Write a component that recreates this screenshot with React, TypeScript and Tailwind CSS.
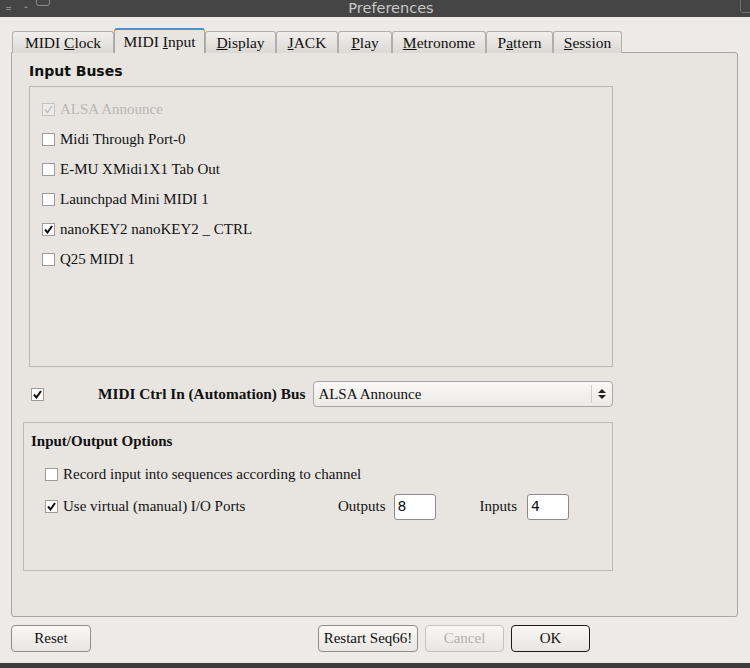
import React from 'react';

const serif = "font-['Liberation_Serif','Times_New_Roman',serif]";
const sans = "font-['DejaVu_Sans','Liberation_Sans',sans-serif]";

function Check({ on, disabled }: { on?: boolean; disabled?: boolean }) {
  return (
    <span
      className={`inline-flex h-[13px] w-[13px] shrink-0 items-center justify-center border ${
        disabled ? 'border-[#c4c2be] bg-[#edebe7]' : 'border-[#9e9c98] bg-white'
      }`}
    >
      {on && (
        <svg width="9" height="9" viewBox="0 0 9 9">
          <path
            d="M1 4.5 L3.5 7.5 L8 1"
            fill="none"
            stroke={disabled ? '#bdbbb7' : '#111'}
            strokeWidth={disabled ? 1.3 : 2}
          />
        </svg>
      )}
    </span>
  );
}

const tabs: { pre: string; u: string; post: string; w: number }[] = [
  { pre: 'MIDI ', u: 'C', post: 'lock', w: 102 },
  { pre: 'MIDI ', u: 'I', post: 'nput', w: 91 },
  { pre: '', u: 'D', post: 'isplay', w: 71 },
  { pre: '', u: 'J', post: 'ACK', w: 62 },
  { pre: '', u: 'P', post: 'lay', w: 54 },
  { pre: '', u: 'M', post: 'etronome', w: 94 },
  { pre: 'P', u: 'a', post: 'ttern', w: 67 },
  { pre: '', u: 'S', post: 'ession', w: 69 },
];

const buses = [
  { name: 'ALSA Announce', on: true, disabled: true },
  { name: 'Midi Through Port-0' },
  { name: 'E-MU XMidi1X1 Tab Out' },
  { name: 'Launchpad Mini MIDI 1' },
  { name: 'nanoKEY2 nanoKEY2 _ CTRL', on: true },
  { name: 'Q25 MIDI 1' },
];

function Btn({ label, w, disabled, def }: { label: string; w: number; disabled?: boolean; def?: boolean }) {
  return (
    <button
      className={`h-[27px] rounded-[4px] border bg-gradient-to-b from-[#f8f7f5] to-[#e9e6e2] text-[15px] ${serif} ${
        def ? 'border-[#1a1a1a]' : disabled ? 'border-[#c6c4c0]' : 'border-[#8f8d89]'
      } ${disabled ? 'text-[#b3b1ad]' : 'text-[#111]'}`}
      style={{ width: w }}
    >
      {label}
    </button>
  );
}

export default function App() {
  return (
    <div className="flex h-[668px] w-[750px] flex-col overflow-hidden bg-[#edebe7]">
      {/* Title bar */}
      <div className="relative flex h-[17px] items-center justify-center bg-[#454545] pl-[32px]">
        <div className="absolute left-[6px] top-[7px] flex flex-col gap-[1px]">
          <span className="h-[1px] w-[5px] bg-[#8a8a8a]" />
          <span className="h-[1px] w-[5px] bg-[#8a8a8a]" />
        </div>
        <span className="absolute left-[24px] top-[6px] h-0 w-0 border-x-[2px] border-b-[2px] border-x-transparent border-b-[#8a8a8a]" />
        <span className="absolute left-[36px] top-[-4px] h-[10px] w-[14px] rounded-[3px] border border-[#8a8a8a]" />
        <span className={`text-[14.5px] leading-none text-[#c8c8c8] ${sans}`}>Preferences</span>
        <span className="absolute right-[-4px] top-[-4px] h-[17px] w-[14px] rounded-[3px] border border-[#707070]" />
      </div>

      <div className="flex flex-1 flex-col pl-[11px] pr-[12px] pt-[11px]">
        {/* Tabs */}
        <div className="relative z-10 flex h-[25px] items-end pl-[1px]">
          {tabs.map((t, i) => {
            const sel = i === 1;
            return (
              <div
                key={i}
                className={`flex items-center justify-center rounded-t-[3px] border border-b-0 pt-[1px] text-[15.5px] text-[#111] ${serif} ${
                  sel
                    ? 'h-[25px] border-[#a9a7a3] border-t-2 border-t-[#4a8fd0] bg-[#e8e5e1]'
                    : 'h-[22px] border-[#b1afab] bg-gradient-to-b from-[#f1efec] to-[#dcd9d5]'
                }`}
                style={{ width: t.w }}
              >
                <span>
                  {t.pre}
                  <u>{t.u}</u>
                  {t.post}
                </span>
              </div>
            );
          })}
        </div>

        {/* Panel */}
        <div className="-mt-[1px] flex h-[565px] flex-col rounded-b-[3px] rounded-tr-[3px] border border-[#a9a7a3] bg-[#e8e5e1] pl-[17px] pr-[124px]">
          <div className={`mt-[9px] h-[18px] text-[14px] font-bold leading-[18px] text-[#111] ${sans}`}>Input Buses</div>
          <div className="mt-[6px] flex h-[281px] flex-col border border-[#b9b7b3] pl-[12px] pt-[7px]">
            {buses.map((b) => (
              <div key={b.name} className="flex h-[30px] items-center gap-[5px]">
                <Check on={b.on} disabled={b.disabled} />
                <span className={`text-[15px] leading-[16px] ${serif} ${b.disabled ? 'text-[#b8b6b2]' : 'text-[#111]'}`}>
                  {b.name}
                </span>
              </div>
            ))}
          </div>

          <div className="ml-[2px] mt-[14px] flex h-[26px] items-center">
            <span className="mb-[3px]">
              <Check on />
            </span>
            <span className={`ml-[54px] text-[15.3px] font-bold text-[#111] ${serif}`}>MIDI Ctrl In (Automation) Bus</span>
            <div className="ml-[8px] flex h-[26px] flex-1 items-center rounded-[4px] border border-[#a8a6a2] bg-gradient-to-b from-[#f9f8f6] to-[#edeae6] pl-[4px]">
              <span className={`flex-1 text-[15px] text-[#111] ${serif}`}>ALSA Announce</span>
              <span className="h-[18px] w-[1px] bg-[#cfcdc9]" />
              <span className="flex w-[20px] flex-col items-center gap-[2px]">
                <span className="h-0 w-0 border-x-[4px] border-b-[4px] border-x-transparent border-b-[#222]" />
                <span className="h-0 w-0 border-x-[4px] border-t-[4px] border-x-transparent border-t-[#222]" />
              </span>
            </div>
          </div>

          <div className="-ml-[6px] mt-[15px] flex h-[149px] flex-col border border-[#bcbab6] pl-[7px]">
            <div className={`mt-[9px] text-[15px] font-bold leading-[18px] text-[#111] ${serif}`}>Input/Output Options</div>
            <div className="ml-[14px] mt-[13px] flex items-center gap-[5px]">
              <Check />
              <span className={`text-[15px] text-[#111] ${serif}`}>Record input into sequences according to channel</span>
            </div>
            <div className="ml-[14px] mt-[8px] flex h-[26px] items-center">
              <Check on />
              <span className={`ml-[5px] w-[275px] text-[15px] text-[#111] ${serif}`}>Use virtual (manual) I/O Ports</span>
              <span className={`text-[15px] text-[#111] ${serif}`}>Outputs</span>
              <div className={`ml-[8px] flex h-[26px] w-[42px] items-center rounded-[3px] border border-[#8d8b87] bg-white pl-[3px] text-[14px] text-[#111] ${sans}`}>
                8
              </div>
              <span className={`ml-[44px] text-[15px] text-[#111] ${serif}`}>Inputs</span>
              <div className={`ml-[10px] flex h-[26px] w-[42px] items-center rounded-[3px] border border-[#8d8b87] bg-white pl-[3px] text-[14px] text-[#111] ${sans}`}>
                4
              </div>
            </div>
          </div>
        </div>

        {/* Buttons */}
        <div className="mt-[8px] flex">
          <Btn label="Reset" w={80} />
          <div className="ml-[227px] flex gap-[7px]">
            <Btn label="Restart Seq66!" w={100} />
            <Btn label="Cancel" w={79} disabled />
            <Btn label="OK" w={79} def />
          </div>
        </div>
      </div>

      <div className="h-[5px] bg-[#3c3c3c]" />
    </div>
  );
}
